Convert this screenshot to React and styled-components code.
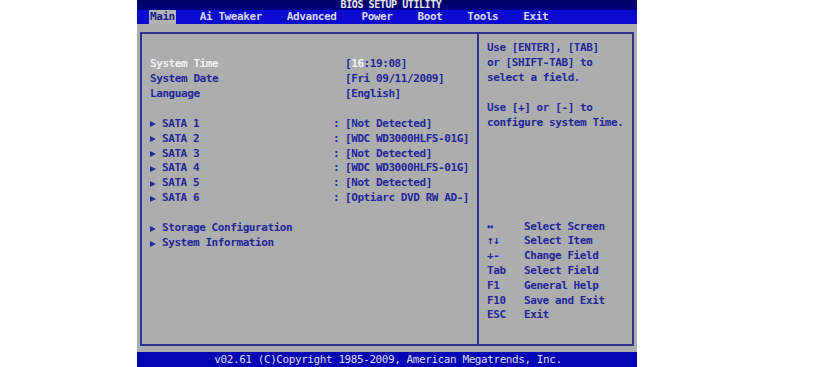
import * as React from "react"
import styled, { createGlobalStyle } from "styled-components"

const GlobalStyle = createGlobalStyle`
  html, body {
    margin: 0;
    padding: 0;
    background: #ffffff;
  }
  body {
    font-family: "DejaVu Sans Mono", "Liberation Mono", monospace;
  }
`

const menu = ["Main", "Ai Tweaker", "Advanced", "Power", "Boot", "Tools", "Exit"]

const drives = [
  ["SATA 1", "[Not Detected]"],
  ["SATA 2", "[WDC WD3000HLFS-01G]"],
  ["SATA 3", "[Not Detected]"],
  ["SATA 4", "[WDC WD3000HLFS-01G]"],
  ["SATA 5", "[Not Detected]"],
  ["SATA 6", "[Optiarc DVD RW AD-]"],
]

const keys = [
  ["↔", "Select Screen"],
  ["↑↓", "Select Item"],
  ["+-", "Change Field"],
  ["Tab", "Select Field"],
  ["F1", "General Help"],
  ["F10", "Save and Exit"],
  ["ESC", "Exit"],
]

const App = () => {
  return (
    <Page>
      <GlobalStyle />
      <Screen>
        <TitleBar>
          <Title>BIOS SETUP UTILITY</Title>
        </TitleBar>
        <MenuBar>
          {menu.map(item => (
            <MenuItem key={item} active={item === "Main"}>
              {item}
            </MenuItem>
          ))}
        </MenuBar>
        <Body>
          <Frame>
            <Settings>
              <Group>
                <Row>
                  <Label selected>System Time</Label>
                  <Sep />
                  <Value>
                    [<Cursor>16</Cursor>:19:08]
                  </Value>
                </Row>
                <Row>
                  <Label>System Date</Label>
                  <Sep />
                  <Value>[Fri 09/11/2009]</Value>
                </Row>
                <Row>
                  <Label>Language</Label>
                  <Sep />
                  <Value>[English]</Value>
                </Row>
              </Group>
              <Group>
                {drives.map(([name, value]) => (
                  <Row key={name}>
                    <Label>
                      <Arrow />
                      {name}
                    </Label>
                    <Sep>:</Sep>
                    <Value>{value}</Value>
                  </Row>
                ))}
              </Group>
              <Group>
                <Row>
                  <Label wide>
                    <Arrow />
                    Storage Configuration
                  </Label>
                </Row>
                <Row>
                  <Label wide>
                    <Arrow />
                    System Information
                  </Label>
                </Row>
              </Group>
            </Settings>
            <Help>
              <HelpText>
                Use [ENTER], [TAB]
                <br />
                or [SHIFT-TAB] to
                <br />
                select a field.
              </HelpText>
              <HelpText>
                Use [+] or [-] to
                <br />
                configure system Time.
              </HelpText>
              <Keys>
                {keys.map(([k, d]) => (
                  <KeyRow key={k}>
                    <Key>{k}</Key>
                    <span>{d}</span>
                  </KeyRow>
                ))}
              </Keys>
            </Help>
          </Frame>
        </Body>
        <Footer>v02.61 (C)Copyright 1985-2009, American Megatrends, Inc.</Footer>
      </Screen>
    </Page>
  )
}

const Page = styled.div`
  display: flex;
  padding-left: 137px;
  height: 367px;
  overflow: hidden;
`

const Screen = styled.div`
  width: 500px;
  display: flex;
  flex-direction: column;
  font-family: "DejaVu Sans Mono", "Liberation Mono", monospace;
  font-weight: bold;
  font-size: 11px;
  letter-spacing: -0.42px;
  color: #24269a;
`

const TitleBar = styled.div`
  height: 10px;
  background: linear-gradient(#000060, #000084);
  display: flex;
  justify-content: center;
  align-items: flex-end;
`

const Title = styled.div`
  color: #e8e8f4;
  font-size: 10px;
  line-height: 10px;
  padding-left: 8px;
`

const MenuBar = styled.div`
  height: 14px;
  background: #0a0ad0;
  display: flex;
  align-items: center;
  padding-left: 13px;
  gap: 25px;
`

const MenuItem = styled.span`
  color: ${p => (p.active ? "#1a1a88" : "#d8d8ee")};
  background: ${p => (p.active ? "#b4b4b8" : "transparent")};
  box-shadow: ${p => (p.active ? "-1px 0 0 #b4b4b8, 1px 0 0 #b4b4b8" : "none")};
  line-height: 14px;
`

const Body = styled.div`
  flex: 1;
  background: #adadad;
  padding: 8px 3px 6px 3px;
  display: flex;
`

const Frame = styled.div`
  flex: 1;
  border: 2px solid #2e3190;
  display: grid;
  grid-template-columns: 335px 1fr;
`

const Settings = styled.div`
  padding: 23px 0 0 8px;
  display: flex;
  flex-direction: column;
  gap: 15px;
`

const Group = styled.div`
  display: flex;
  flex-direction: column;
`

const Row = styled.div`
  display: grid;
  grid-template-columns: 183px 12px auto;
  line-height: 14.9px;
  white-space: nowrap;
`

const Label = styled.span`
  color: ${p => (p.selected ? "#f2f2f2" : "#24269a")};
  display: flex;
  align-items: center;
  grid-column: ${p => (p.wide ? "1 / 4" : "auto")};
`

const Arrow = styled.span`
  width: 0;
  height: 0;
  border-top: 3.5px solid transparent;
  border-bottom: 3.5px solid transparent;
  border-left: 6px solid #24269a;
  margin-right: 6px;
`

const Sep = styled.span``

const Value = styled.span``

const Cursor = styled.span`
  color: #f2f2f2;
`

const Help = styled.div`
  border-left: 2px solid #2e3190;
  padding: 7px 0 0 8px;
  display: flex;
  flex-direction: column;
  gap: 15px;
`

const HelpText = styled.div`
  line-height: 14.9px;
  white-space: nowrap;
`

const Keys = styled.div`
  margin-top: 74px;
  display: flex;
  flex-direction: column;
`

const KeyRow = styled.div`
  display: grid;
  grid-template-columns: 37px auto;
  line-height: 14.8px;
  white-space: nowrap;
`

const Key = styled.span``

const Footer = styled.div`
  height: 15px;
  background: #0404b4;
  color: #dcdcec;
  font-weight: normal;
  text-align: center;
  line-height: 15px;
  padding-left: 2px;
`

export default App
